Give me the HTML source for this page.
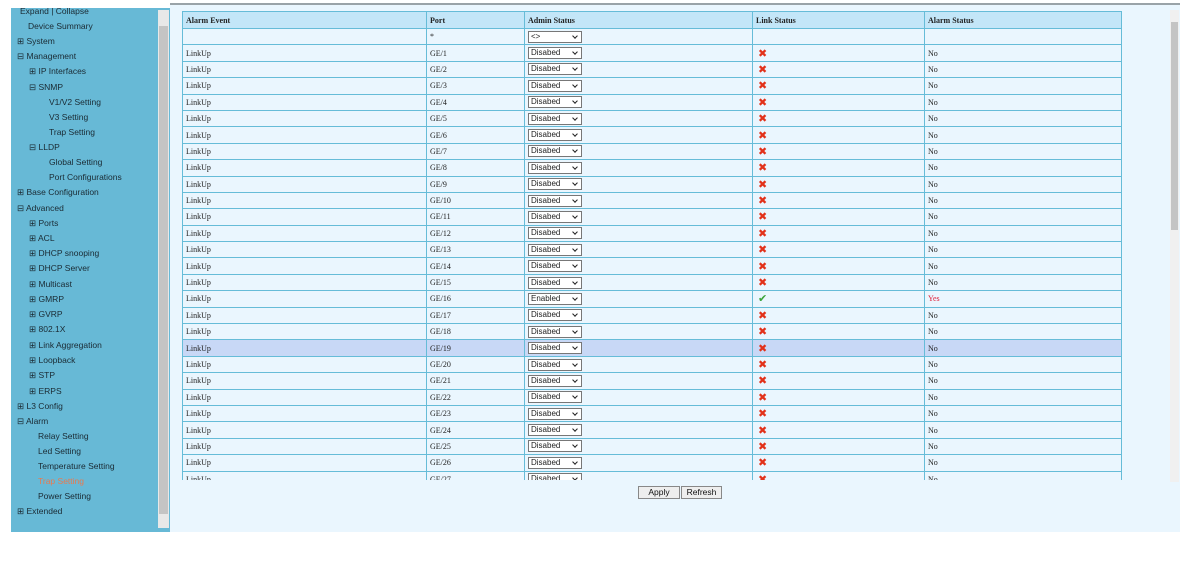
<!DOCTYPE html>
<html><head><meta charset="utf-8"><style>
*{margin:0;padding:0;box-sizing:border-box}
body{width:1188px;height:562px;background:#fff;position:relative;overflow:hidden;font-family:"Liberation Sans",sans-serif}
#topline{position:absolute;left:170px;top:3px;width:1010px;height:2px;background:#9aa3a8}
#side{position:absolute;left:11px;top:8px;width:159px;height:524px;background:#67b9d6;overflow:hidden}
#side div{position:absolute;font-size:8.5px;color:#1a2a33;white-space:nowrap;line-height:10px}
#side #sbar{position:absolute;left:147px;top:2px;width:11px;height:518px;background:#e8e8e8}
#side #sthumb{position:absolute;left:148px;top:18px;width:9px;height:488px;background:#c4c4c4}
#main{position:absolute;left:170px;top:5px;width:1010px;height:527px;background:#eaf6fe}
#wrap{position:absolute;left:182px;top:11px;width:940px;height:469px;overflow:hidden}
table{border-collapse:collapse;table-layout:fixed;width:939px;font-family:"Liberation Serif",serif;font-size:8px;color:#222}
td,th{border:1.5px solid #66bcd8;height:16.4px;padding:0 3px;text-align:left;white-space:nowrap;overflow:hidden}
th{background:#c3e6f8;font-weight:bold;height:17px}
tr.h td{background:#c8d8f6}
.sel{display:inline-block;width:54px;height:12px;border:1px solid #777;background:#fff;font-family:"Liberation Sans",sans-serif;font-size:8px;line-height:10px;padding-left:2px;position:relative;vertical-align:middle}
.sel:after{content:"";position:absolute;right:4px;top:2px;width:3px;height:3px;border-right:1.5px solid #222;border-bottom:1.5px solid #222;transform:rotate(45deg)}
.x{color:#e2321a;font-weight:bold;font-size:11px;font-family:"DejaVu Sans",sans-serif;margin-left:2px}
.v{color:#3aa43a;font-weight:bold;font-size:11px;font-family:"DejaVu Sans",sans-serif;margin-left:2px}
#rbar{position:absolute;left:1170px;top:10px;width:9px;height:472px;background:#f0f0f0}
#rthumb{position:absolute;left:1171px;top:22px;width:7px;height:208px;background:#c4c4c4}
.btn{position:absolute;top:486px;height:13px;border:1px solid #888;background:#eee;font-size:8.5px;line-height:11px;text-align:center;color:#111}
</style></head><body>
<div id="topline"></div>
<div id="side">
<div style="left:9px;top:-2px">Expand | Collapse</div>
<div style="left:17px;top:13px">Device Summary</div>
<div style="left:6px;top:28px">⊞ System</div>
<div style="left:6px;top:43px">⊟ Management</div>
<div style="left:18px;top:58px">⊞ IP Interfaces</div>
<div style="left:18px;top:74px">⊟ SNMP</div>
<div style="left:38px;top:89px">V1/V2 Setting</div>
<div style="left:38px;top:104px">V3 Setting</div>
<div style="left:38px;top:119px">Trap Setting</div>
<div style="left:18px;top:134px">⊟ LLDP</div>
<div style="left:38px;top:149px">Global Setting</div>
<div style="left:38px;top:164px">Port Configurations</div>
<div style="left:6px;top:179px">⊞ Base Configuration</div>
<div style="left:6px;top:195px">⊟ Advanced</div>
<div style="left:18px;top:210px">⊞ Ports</div>
<div style="left:18px;top:225px">⊞ ACL</div>
<div style="left:18px;top:240px">⊞ DHCP snooping</div>
<div style="left:18px;top:255px">⊞ DHCP Server</div>
<div style="left:18px;top:271px">⊞ Multicast</div>
<div style="left:18px;top:286px">⊞ GMRP</div>
<div style="left:18px;top:301px">⊞ GVRP</div>
<div style="left:18px;top:316px">⊞ 802.1X</div>
<div style="left:18px;top:332px">⊞ Link Aggregation</div>
<div style="left:18px;top:347px">⊞ Loopback</div>
<div style="left:18px;top:362px">⊞ STP</div>
<div style="left:18px;top:378px">⊞ ERPS</div>
<div style="left:6px;top:393px">⊞ L3 Config</div>
<div style="left:6px;top:408px">⊟ Alarm</div>
<div style="left:27px;top:423px">Relay Setting</div>
<div style="left:27px;top:438px">Led Setting</div>
<div style="left:27px;top:453px">Temperature Setting</div>
<div style="left:27px;top:468px;color:#e87a50">Trap Setting</div>
<div style="left:27px;top:483px">Power Setting</div>
<div style="left:6px;top:498px">⊞ Extended</div>
<div id="sbar"></div><div id="sthumb"></div>
</div>
<div id="main"></div>
<div id="wrap"><table>
<colgroup><col style="width:244px"><col style="width:98px"><col style="width:228px"><col style="width:172px"><col style="width:197px"></colgroup>
<tr><th>Alarm Event</th><th>Port</th><th>Admin Status</th><th>Link Status</th><th>Alarm Status</th></tr>
<tr><td></td><td>*</td><td><span class="sel">&lt;&gt;</span></td><td></td><td></td></tr>
<tr><td>LinkUp</td><td>GE/1</td><td><span class="sel">Disabed</span></td><td><span class="x">✖</span></td><td>No</td></tr>
<tr><td>LinkUp</td><td>GE/2</td><td><span class="sel">Disabed</span></td><td><span class="x">✖</span></td><td>No</td></tr>
<tr><td>LinkUp</td><td>GE/3</td><td><span class="sel">Disabed</span></td><td><span class="x">✖</span></td><td>No</td></tr>
<tr><td>LinkUp</td><td>GE/4</td><td><span class="sel">Disabed</span></td><td><span class="x">✖</span></td><td>No</td></tr>
<tr><td>LinkUp</td><td>GE/5</td><td><span class="sel">Disabed</span></td><td><span class="x">✖</span></td><td>No</td></tr>
<tr><td>LinkUp</td><td>GE/6</td><td><span class="sel">Disabed</span></td><td><span class="x">✖</span></td><td>No</td></tr>
<tr><td>LinkUp</td><td>GE/7</td><td><span class="sel">Disabed</span></td><td><span class="x">✖</span></td><td>No</td></tr>
<tr><td>LinkUp</td><td>GE/8</td><td><span class="sel">Disabed</span></td><td><span class="x">✖</span></td><td>No</td></tr>
<tr><td>LinkUp</td><td>GE/9</td><td><span class="sel">Disabed</span></td><td><span class="x">✖</span></td><td>No</td></tr>
<tr><td>LinkUp</td><td>GE/10</td><td><span class="sel">Disabed</span></td><td><span class="x">✖</span></td><td>No</td></tr>
<tr><td>LinkUp</td><td>GE/11</td><td><span class="sel">Disabed</span></td><td><span class="x">✖</span></td><td>No</td></tr>
<tr><td>LinkUp</td><td>GE/12</td><td><span class="sel">Disabed</span></td><td><span class="x">✖</span></td><td>No</td></tr>
<tr><td>LinkUp</td><td>GE/13</td><td><span class="sel">Disabed</span></td><td><span class="x">✖</span></td><td>No</td></tr>
<tr><td>LinkUp</td><td>GE/14</td><td><span class="sel">Disabed</span></td><td><span class="x">✖</span></td><td>No</td></tr>
<tr><td>LinkUp</td><td>GE/15</td><td><span class="sel">Disabed</span></td><td><span class="x">✖</span></td><td>No</td></tr>
<tr><td>LinkUp</td><td>GE/16</td><td><span class="sel">Enabled</span></td><td><span class="v">✔</span></td><td style="color:#e0203a">Yes</td></tr>
<tr><td>LinkUp</td><td>GE/17</td><td><span class="sel">Disabed</span></td><td><span class="x">✖</span></td><td>No</td></tr>
<tr><td>LinkUp</td><td>GE/18</td><td><span class="sel">Disabed</span></td><td><span class="x">✖</span></td><td>No</td></tr>
<tr class="h"><td>LinkUp</td><td>GE/19</td><td><span class="sel">Disabed</span></td><td><span class="x">✖</span></td><td>No</td></tr>
<tr><td>LinkUp</td><td>GE/20</td><td><span class="sel">Disabed</span></td><td><span class="x">✖</span></td><td>No</td></tr>
<tr><td>LinkUp</td><td>GE/21</td><td><span class="sel">Disabed</span></td><td><span class="x">✖</span></td><td>No</td></tr>
<tr><td>LinkUp</td><td>GE/22</td><td><span class="sel">Disabed</span></td><td><span class="x">✖</span></td><td>No</td></tr>
<tr><td>LinkUp</td><td>GE/23</td><td><span class="sel">Disabed</span></td><td><span class="x">✖</span></td><td>No</td></tr>
<tr><td>LinkUp</td><td>GE/24</td><td><span class="sel">Disabed</span></td><td><span class="x">✖</span></td><td>No</td></tr>
<tr><td>LinkUp</td><td>GE/25</td><td><span class="sel">Disabed</span></td><td><span class="x">✖</span></td><td>No</td></tr>
<tr><td>LinkUp</td><td>GE/26</td><td><span class="sel">Disabed</span></td><td><span class="x">✖</span></td><td>No</td></tr>
<tr><td>LinkUp</td><td>GE/27</td><td><span class="sel">Disabed</span></td><td><span class="x">✖</span></td><td>No</td></tr>
</table></div>
<div id="rbar"></div><div id="rthumb"></div>
<div class="btn" style="left:638px;width:42px">Apply</div>
<div class="btn" style="left:681px;width:41px">Refresh</div>
</body></html>
